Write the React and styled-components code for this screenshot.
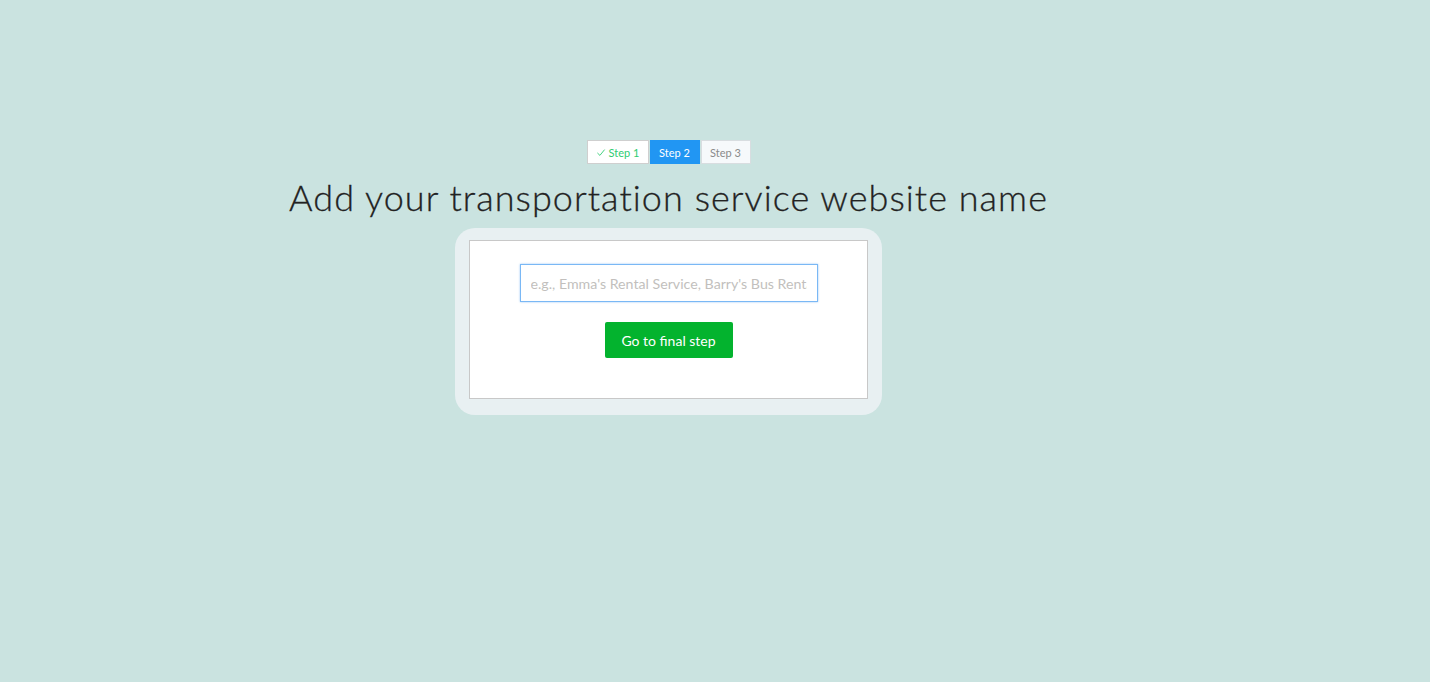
import React from "react";
import styled, { createGlobalStyle } from "styled-components";

const GlobalStyle = createGlobalStyle`
  html, body {
    margin: 0;
    padding: 0;
    background: #cae3e0;
    font-family: Lato, "Open Sans", sans-serif;
  }
`;

const steps = [
  { label: "Step 1", state: "done" },
  { label: "Step 2", state: "active" },
  { label: "Step 3", state: "todo" },
];

export default () => (
  <>
    <GlobalStyle />
    <Page>
      <Steps>
        {steps.map((s) => (
          <StepTab key={s.label} $state={s.state}>
            {s.state === "done" && (
              <Check viewBox="0 0 10 10">
                <path d="M1 5.5 L3.8 8.2 L9 1.8" />
              </Check>
            )}
            {s.label}
          </StepTab>
        ))}
      </Steps>
      <Title>Add your transportation service website name</Title>
      <Frame>
        <Card>
          <NameInput
            type="text"
            placeholder="e.g., Emma's Rental Service, Barry's Bus Rentals"
          />
          <NextButton>Go to final step</NextButton>
        </Card>
      </Frame>
    </Page>
  </>
);

const Page = styled.main`
  width: 1337px;
  height: 682px;
  display: flex;
  flex-direction: column;
  align-items: center;
  padding-top: 140px;
  box-sizing: border-box;
`;

const Steps = styled.div`
  display: flex;
  gap: 1px;
  height: 24px;
`;

const tabColors = {
  done: { bg: "#ffffff", fg: "#2ecc71", border: "#cfcfcf", width: "62px" },
  active: { bg: "#2196f3", fg: "#ffffff", border: "#2196f3", width: "50px" },
  todo: { bg: "#f6f9fb", fg: "#8a8a8a", border: "#d8dde0", width: "50px" },
};

const StepTab = styled.div`
  display: flex;
  align-items: center;
  justify-content: center;
  box-sizing: border-box;
  width: ${(p) => tabColors[p.$state].width};
  background: ${(p) => tabColors[p.$state].bg};
  color: ${(p) => tabColors[p.$state].fg};
  border: 1px solid ${(p) => tabColors[p.$state].border};
  font-size: 11px;
`;

const Check = styled.svg`
  width: 10px;
  height: 9px;
  margin-right: 3px;
  fill: none;
  stroke: #2ecc71;
  stroke-width: 1;
`;

const Title = styled.h1`
  margin: 8px 0 0;
  font-size: 36px;
  font-weight: 300;
  color: #222;
  line-height: 50px;
  letter-spacing: 1.05px;
  -webkit-text-stroke: 0.3px #222;
`;

const Frame = styled.div`
  margin-top: 6px;
  width: 427px;
  box-sizing: border-box;
  padding: 12px 14px 16px;
  background: #e8f0f2;
  border-radius: 20px;
`;

const Card = styled.div`
  height: 159px;
  box-sizing: border-box;
  background: #fff;
  border: 1px solid #c8c8c8;
  display: flex;
  flex-direction: column;
  align-items: center;
  padding-top: 23px;
`;

const NameInput = styled.input`
  width: 298px;
  height: 38px;
  box-sizing: border-box;
  border: 1px solid #7ab8f5;
  box-shadow: 0 0 2px #9cc8f5;
  padding: 0 10px;
  font-family: Lato, sans-serif;
  font-size: 14.2px;
  color: #333;
  outline: none;

  &::placeholder {
    color: #c2bfbd;
  }
`;

const NextButton = styled.button`
  margin-top: 20px;
  width: 128px;
  height: 36px;
  border: none;
  border-radius: 2px;
  background: #03b32e;
  color: #fff;
  font-family: Lato, sans-serif;
  font-size: 14px;
  cursor: pointer;
`;
